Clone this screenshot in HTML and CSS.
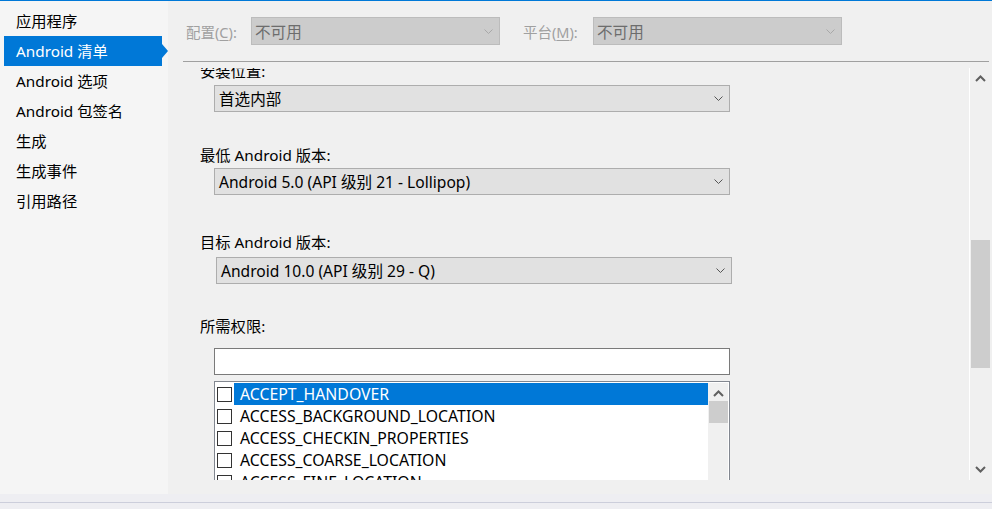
FILE: index.html
```html
<!DOCTYPE html>
<html lang="zh">
<head>
<meta charset="utf-8">
<link rel="stylesheet" href="styles.css">
</head>
<body>
<div class="window">
  <div class="main">
    <nav class="sidebar">
      <div class="nav-item">应用程序</div>
      <div class="nav-item active">Android 清单</div>
      <div class="nav-item">Android 选项</div>
      <div class="nav-item">Android 包签名</div>
      <div class="nav-item">生成</div>
      <div class="nav-item">生成事件</div>
      <div class="nav-item">引用路径</div>
    </nav>
    <section class="pane">
      <div class="toolbar">
        <span class="tb-label lbl-config">配置(<u>C</u>):</span>
        <div class="select disabled sel-config"><span>不可用</span>
          <svg class="chev" width="9" height="5" viewBox="0 0 9 5"><path d="M0.5 0.5 L4.5 4.5 L8.5 0.5"/></svg>
        </div>
        <span class="tb-label lbl-platform">平台(<u>M</u>):</span>
        <div class="select disabled sel-platform"><span>不可用</span>
          <svg class="chev" width="9" height="5" viewBox="0 0 9 5"><path d="M0.5 0.5 L4.5 4.5 L8.5 0.5"/></svg>
        </div>
      </div>
      <div class="separator"></div>
      <div class="scroll-area">
        <div class="viewport">
          <div class="content">
            <div class="field-label g1">安装位置:</div>
            <div class="select field sel1"><span>首选内部</span>
              <svg class="chev" width="9" height="5" viewBox="0 0 9 5"><path d="M0.5 0.5 L4.5 4.5 L8.5 0.5"/></svg>
            </div>
            <div class="field-label g2">最低 Android 版本:</div>
            <div class="select field sel2"><span>Android 5.0 (API 级别 21 - Lollipop)</span>
              <svg class="chev" width="9" height="5" viewBox="0 0 9 5"><path d="M0.5 0.5 L4.5 4.5 L8.5 0.5"/></svg>
            </div>
            <div class="field-label g3">目标 Android 版本:</div>
            <div class="select field sel3"><span>Android 10.0 (API 级别 29 - Q)</span>
              <svg class="chev" width="9" height="5" viewBox="0 0 9 5"><path d="M0.5 0.5 L4.5 4.5 L8.5 0.5"/></svg>
            </div>
            <div class="field-label g4">所需权限:</div>
            <div class="textbox"></div>
            <div class="listbox">
              <div class="list-rows">
                <div class="row"><span class="cb"></span><span class="item selected">ACCEPT_HANDOVER</span></div>
                <div class="row"><span class="cb"></span><span class="item">ACCESS_BACKGROUND_LOCATION</span></div>
                <div class="row"><span class="cb"></span><span class="item">ACCESS_CHECKIN_PROPERTIES</span></div>
                <div class="row"><span class="cb"></span><span class="item">ACCESS_COARSE_LOCATION</span></div>
                <div class="row"><span class="cb"></span><span class="item">ACCESS_FINE_LOCATION</span></div>
              </div>
              <div class="list-scroll">
                <svg class="arrow" width="11" height="7" viewBox="0 0 11 7"><path d="M1 6 L5.5 1.5 L10 6"/></svg>
                <div class="list-thumb"></div>
              </div>
            </div>
          </div>
        </div>
        <div class="vscroll">
          <svg class="arrow up" width="11" height="7" viewBox="0 0 11 7"><path d="M1 6 L5.5 1.5 L10 6"/></svg>
          <div class="vthumb"></div>
          <svg class="arrow down" width="11" height="7" viewBox="0 0 11 7"><path d="M1 1 L5.5 5.5 L10 1"/></svg>
        </div>
      </div>
    </section>
  </div>
  <div class="statusbar"><div class="status-line"></div></div>
</div>
</body>
</html>
```
FILE: styles.css
```css
* { box-sizing: border-box; }
html, body { margin: 0; padding: 0; }
body {
  width: 992px;
  height: 509px;
  overflow: hidden;
  background: #f0f0f0;
  font-family: "Noto Sans", "Noto Sans CJK SC", sans-serif;
  font-size: 14px;
  color: #000;
}
.window {
  height: 509px;
  border-top: 1px solid #0078d7;
  display: flex;
  flex-direction: column;
}
.main {
  display: flex;
  height: 493px;
}
.sidebar {
  width: 168px;
  background: #f5f5f5;
  padding-top: 5px;
}
.nav-item {
  position: relative;
  height: 30px;
  line-height: 30px;
  margin-left: 4px;
  width: 158px;
  padding-left: 12px;
  font-size: 15.3px;
  white-space: nowrap;
}
.nav-item.active {
  background: #0078d7;
  color: #fff;
}
.nav-item.active::after {
  content: "";
  position: absolute;
  right: -6px;
  top: 8px;
  border-left: 6px solid #0078d7;
  border-top: 7px solid transparent;
  border-bottom: 7px solid transparent;
}
.pane {
  flex: 1;
  display: flex;
  flex-direction: column;
}
.toolbar {
  height: 60px;
  display: flex;
  align-items: center;
  padding-left: 18px;
}
.tb-label {
  color: #a0a0a0;
  font-size: 14.5px;
  white-space: nowrap;
}
.tb-label u { text-decoration-thickness: 1px; text-underline-offset: 2px; }
.lbl-config { width: 65px; }
.lbl-platform { width: 70px; margin-left: 23px; }
.select {
  height: 27px;
  display: flex;
  align-items: center;
  justify-content: space-between;
  padding: 0 6px 0 4px;
  border: 1px solid #adadad;
  background: #e1e1e1;
  font-size: 15.6px;
  white-space: nowrap;
}
.select .chev path { fill: none; stroke: #555; stroke-width: 1; }
.select.disabled {
  width: 249px;
  height: 28px;
  padding-left: 3px;
  background: #cccccc;
  border-color: #bcbcbc;
  color: #6d6d6d;
}
.select.disabled .chev path { stroke: #a8a8a8; }
.separator {
  height: 1px;
  background: #a0a0a0;
  margin: 0 3px 0 15px;
}
.scroll-area {
  margin-top: 6px;
  height: 412px;
  display: flex;
  padding-left: 15px;
}
.viewport {
  flex: 1;
  overflow: hidden;
}
.content {
  margin-top: -7px;
  padding-left: 17px;
}
.field-label {
  height: 20px;
  line-height: 20px;
  font-size: 15.3px;
  white-space: nowrap;
}
.g2 { margin-top: 33px; }
.g3 { margin-top: 37px; }
.g4 { margin-top: 32px; }
.field {
  width: 516px;
  margin-left: 14px;
}
.sel1 { margin-top: 4px; }
.sel2 { margin-top: 3px; }
.sel3 { margin-top: 5px; margin-left: 16px; }
.textbox {
  margin-top: 12px;
  margin-left: 14px;
  width: 516px;
  height: 27px;
  background: #fff;
  border: 1px solid #7a7a7a;
}
.listbox {
  margin-top: 6px;
  margin-left: 14px;
  width: 516px;
  height: 140px;
  border: 1px solid #828790;
  background: #fff;
  display: flex;
  padding: 1px 1px 0 2px;
}
.list-rows { flex: 1; }
.row {
  display: flex;
  align-items: center;
  height: 22px;
}
.cb {
  width: 15px;
  height: 15px;
  border: 1px solid #333;
  background: #fff;
  flex: none;
}
.item {
  flex: 1;
  height: 22px;
  line-height: 22px;
  margin-left: 2px;
  padding-left: 6px;
  font-size: 15.8px;
  white-space: nowrap;
}
.item.selected { background: #0078d7; color: #fff; }
.list-scroll {
  width: 20px;
  background: #f0f0f0;
  display: flex;
  flex-direction: column;
  align-items: center;
}
.list-scroll .arrow { margin-top: 7px; }
.arrow path { fill: none; stroke: #606060; stroke-width: 2; }
.list-thumb {
  margin-top: 4px;
  width: 19px;
  height: 22px;
  background: #cdcdcd;
}
.vscroll {
  width: 21px;
  margin-right: 2px;
  border-left: 1px solid #fff;
  display: flex;
  flex-direction: column;
  align-items: center;
}
.vscroll .up { margin-top: 7px; }
.vthumb {
  margin-top: 158px;
  width: 19px;
  height: 128px;
  background: #cdcdcd;
}
.vscroll .down { margin-top: 98px; }
.statusbar {
  flex: 1;
  background: #eeeef2;
  padding-top: 8px;
}
.status-line {
  height: 1px;
  background: #cccedb;
}
```
